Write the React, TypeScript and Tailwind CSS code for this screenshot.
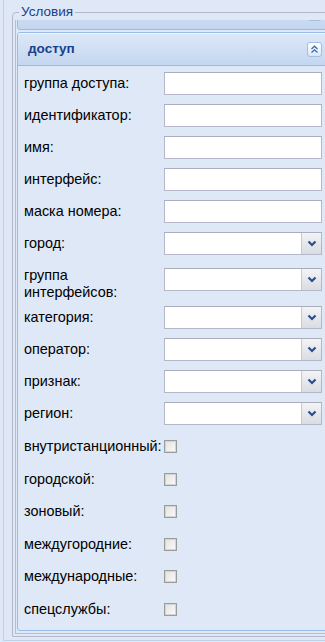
import React from 'react';

const textFields = ['группа доступа:', 'идентификатор:', 'имя:', 'интерфейс:', 'маска номера:'];
const selectsAfterGroup = ['категория:', 'оператор:', 'признак:', 'регион:'];
const checks = ['внутристанционный:', 'городской:', 'зоновый:', 'междугородние:', 'международные:', 'спецслужбы:'];

const Chevron = () => (
  <svg width="10" height="7" viewBox="0 0 10 7">
    <polyline points="1.5,1.5 5,5 8.5,1.5" fill="none" stroke="#2c4f8c" strokeWidth="2.2" />
  </svg>
);

const TextInput = () => (
  <div className="w-[158px] h-[23px] border border-[#b5b8c8] border-t-[#a9aeba] bg-white shrink-0" />
);

const Select = () => (
  <div className="w-[158px] h-[23px] flex shrink-0 border border-[#b5b8c8] border-t-[#a9aeba] bg-white">
    <div className="flex-1" />
    <div className="w-[20px] h-full flex items-center justify-center bg-gradient-to-b from-[#f3f4f6] to-[#d9dce1] border-l border-[#c7cad3]">
      <Chevron />
    </div>
  </div>
);

const Checkbox = () => (
  <div className="w-[13px] h-[13px] border border-[#9b9b9b] bg-gradient-to-br from-[#e2e2e2] to-[#fbfbfb] shadow-[inset_0_0_0_1px_#d4d4d4] shrink-0" />
);

const Label = ({ text, cls = '' }: { text: string; cls?: string }) => (
  <div className={`w-[140px] shrink-0 text-[14.4px] leading-[17px] text-black ${cls}`}>{text}</div>
);

const UpIcon = () => (
  <div className="w-[15px] h-[15px] rounded-[3px] border border-[#a4bde2] bg-gradient-to-b from-[#ffffff] to-[#dce7f6] flex items-center justify-center shrink-0">
    <svg width="9" height="9" viewBox="0 0 9 9">
      <polyline points="1.5,4 4.5,1.2 7.5,4" fill="none" stroke="#3c6cb0" strokeWidth="1.3" />
      <polyline points="1.5,7.6 4.5,4.8 7.5,7.6" fill="none" stroke="#3c6cb0" strokeWidth="1.3" />
    </svg>
  </div>
);

export default function App() {
  return (
    <div className="w-[325px] h-[642px] bg-[#dfe8f6] overflow-hidden font-['Liberation_Sans',Arial,sans-serif]">
      <div className="ml-[3px] w-[400px] h-[641px] border-l border-b border-[#bfd2ec] pt-[12px]">
        {/* fieldset */}
        <div className="relative ml-[8px] h-[625px] border border-[#b5b8c8] rounded-tl-[4px]">
          {/* scroll area */}
          <div className="ml-[2px] mt-[7px] h-[614px] border-l border-b border-[#a9c2e5] overflow-hidden">
            {/* collapsed panel, scrolled up */}
            <div className="ml-[1px] -mt-[23px] w-[312px] h-[33px] rounded-[3px] border border-[#99bbe8] bg-gradient-to-b from-[#dae6f5] to-[#c3d6ef] flex items-center justify-between pl-[10px] pr-[6px]">
              <span className="text-[13.5px] font-bold text-[#15428b] -mt-[4px]">доступ</span>
              <UpIcon />
            </div>
            {/* panel */}
            <div className="ml-[1px] mt-[2px] w-[312px] h-[599px] border border-[#99bbe8] rounded-t-[3px] rounded-b-[3px] overflow-hidden">
              <div className="h-[33px] flex items-center justify-between pl-[10px] pr-[6px] bg-gradient-to-b from-[#dce8f7] to-[#c4d7f0] border-b border-[#99bbe8] shadow-[inset_0_1px_0_#eef4fc]">
                <span className="text-[13.5px] font-bold text-[#15428b]">доступ</span>
                <UpIcon />
              </div>
              <div className="pl-[6px] pt-[6px]">
                {textFields.map((t) => (
                  <div key={t} className="h-[32px] flex items-start">
                    <Label text={t} cls="mt-[3px]" />
                    <TextInput />
                  </div>
                ))}
                <div className="h-[32px] flex items-start">
                  <Label text="город:" cls="mt-[3px]" />
                  <Select />
                </div>
                <div className="h-[42px] flex items-start">
                  <Label text="группа интерфейсов:" cls="mt-[3px] pr-[20px]" />
                  <div className="mt-[4px]">
                    <Select />
                  </div>
                </div>
                {selectsAfterGroup.map((t) => (
                  <div key={t} className="h-[32px] flex items-start">
                    <Label text={t} cls="mt-[3px]" />
                    <Select />
                  </div>
                ))}
                {checks.map((t) => (
                  <div key={t} className="h-[32.6px] flex items-start">
                    <Label text={t} cls="mt-[4px] whitespace-nowrap" />
                    <div className="mt-[6px]">
                      <Checkbox />
                    </div>
                  </div>
                ))}
              </div>
            </div>
          </div>
          {/* legend */}
          <div className="absolute -top-[9px] left-[6px] px-[2px] bg-[#dfe8f6] text-[13.5px] leading-[16px] text-[#15428b]">
            Условия
          </div>
        </div>
      </div>
    </div>
  );
}
